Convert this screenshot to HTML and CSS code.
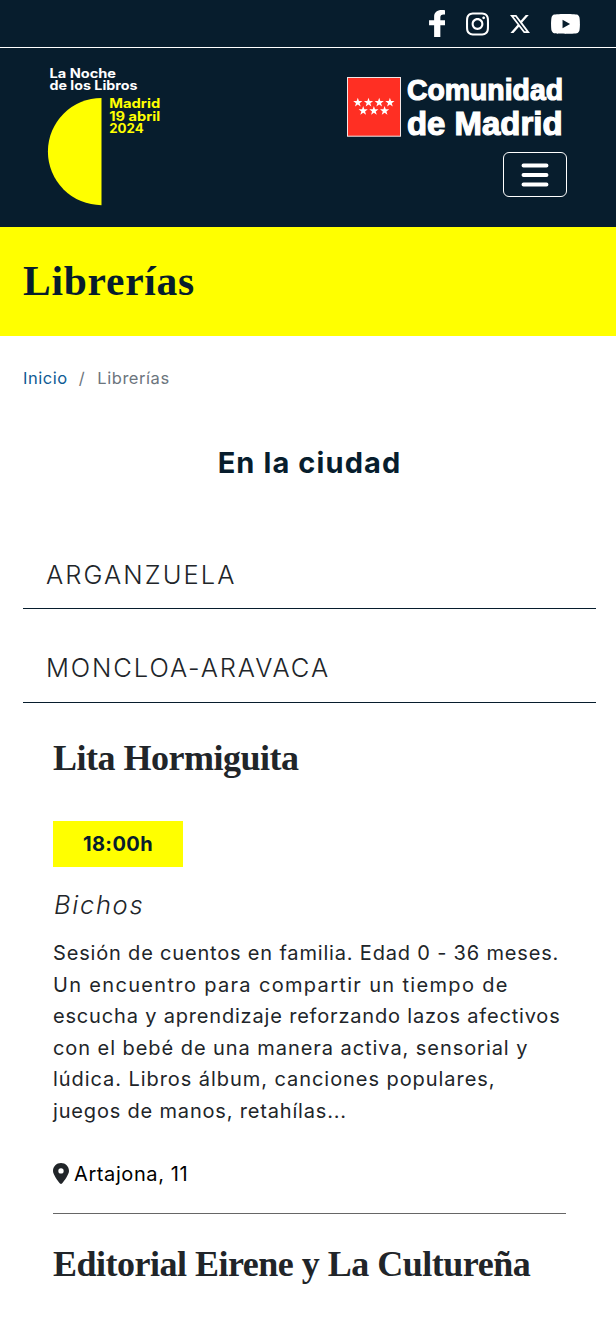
FILE: index.html
```html
<!DOCTYPE html>
<html lang="es">
<head>
<meta charset="utf-8">
<title>Librerías - La Noche de los Libros</title>
<link rel="stylesheet" href="styles.css">
</head>
<body>
<div class="topbar">
  <a class="social"><svg width="16" height="27" viewBox="22 0 257 512" preserveAspectRatio="none"><path d="M279.14 288l14.22-92.66h-88.91v-60.13c0-25.35 12.42-50.06 52.24-50.06h40.42V6.26S260.43 0 225.36 0c-73.22 0-121.08 44.38-121.08 124.72v70.62H22.89V288h81.39v224h100.17V288z"/></svg></a>
  <a class="social"><svg width="23" height="24" viewBox="0 31 448 450"><path d="M224.1 141c-63.6 0-114.9 51.3-114.9 114.9s51.3 114.9 114.9 114.9S339 319.5 339 255.9 287.7 141 224.1 141zm0 189.6c-41.1 0-74.7-33.5-74.7-74.7s33.5-74.7 74.7-74.7 74.7 33.5 74.7 74.7-33.6 74.7-74.7 74.7zm146.4-194.3c0 14.9-12 26.8-26.8 26.8-14.9 0-26.8-12-26.8-26.8s12-26.8 26.8-26.8 26.8 12 26.8 26.8zm76.1 27.2c-1.7-35.9-9.9-67.7-36.2-93.9-26.2-26.2-58-34.4-93.9-36.2-37-2.1-147.9-2.1-184.9 0-35.8 1.7-67.6 9.9-93.9 36.1s-34.4 58-36.2 93.9c-2.1 37-2.1 147.9 0 184.9 1.7 35.9 9.9 67.7 36.2 93.9s58 34.4 93.9 36.2c37 2.1 147.9 2.1 184.9 0 35.9-1.7 67.7-9.9 93.9-36.2 26.2-26.2 34.4-58 36.2-93.9 2.1-37 2.1-147.8 0-184.8zM398.8 388c-7.8 19.6-22.9 34.7-42.6 42.6-29.5 11.7-99.5 9-132.1 9s-102.7 2.6-132.1-9c-19.6-7.8-34.7-22.9-42.6-42.6-11.7-29.5-9-99.5-9-132.1s-2.6-102.7 9-132.1c7.8-19.6 22.9-34.7 42.6-42.6 29.5-11.7 99.5-9 132.1-9s102.7-2.6 132.1 9c19.6 7.8 34.7 22.9 42.6 42.6 11.7 29.5 9 99.5 9 132.1s2.7 102.7-9 132.1z"/></svg></a>
  <a class="social"><svg width="20" height="18" viewBox="1.25 2.25 21.6 19.5" preserveAspectRatio="none"><path d="M18.244 2.25h3.308l-7.227 8.26 8.502 11.24H16.17l-5.214-6.817L4.99 21.75H1.68l7.73-8.835L1.254 2.25H8.08l4.713 6.231zm-1.161 17.52h1.833L7.084 4.126H5.117z"/></svg></a>
  <a class="social"><svg width="29" height="20" viewBox="14 64 548 385" preserveAspectRatio="none"><path d="M549.655 124.083c-6.281-23.65-24.787-42.276-48.284-48.597C458.781 64 288 64 288 64S117.22 64 74.629 75.486c-23.497 6.322-42.003 24.947-48.284 48.597-11.412 42.867-11.412 132.305-11.412 132.305s0 89.438 11.412 132.305c6.281 23.65 24.787 41.5 48.284 47.821C117.22 448 288 448 288 448s170.78 0 213.371-11.486c23.497-6.321 42.003-24.171 48.284-47.821 11.412-42.867 11.412-132.305 11.412-132.305s0-89.438-11.412-132.305zm-317.51 213.508V175.185l142.739 81.205-142.739 81.201z"/></svg></a>
</div>
<header class="header">
  <svg class="event-logo" width="116" height="142" viewBox="46 65 116 142">
    <path class="yellow" d="M101.5 98A53.6 53.6 0 0 0 101.5 205.2Z"/>
    <g class="event-text">
      <text x="49.5" y="77.5" textLength="66.5" lengthAdjust="spacingAndGlyphs">La Noche</text>
      <text x="49.5" y="90.2" textLength="88" lengthAdjust="spacingAndGlyphs">de los Libros</text>
      <g class="yellow">
        <text x="109.2" y="108.2" textLength="51" lengthAdjust="spacingAndGlyphs">Madrid</text>
        <text x="109.2" y="120.6" textLength="51" lengthAdjust="spacingAndGlyphs">19 abril</text>
        <text x="109.2" y="133.2" textLength="34.5" lengthAdjust="spacingAndGlyphs">2024</text>
      </g>
    </g>
  </svg>
  <div class="header-side">
    <svg width="220" height="76" viewBox="347 68 220 76">
      <defs><path id="star" d="M0-4.8 1.15-1.5 4.6-1.5 1.85.6 2.85 3.9 0 1.9-2.85 3.9-1.85.6-4.6-1.5-1.15-1.5Z"/></defs>
      <rect class="flag" x="347.5" y="77.5" width="53" height="58.7"/>
      <g class="white">
        <use href="#star" x="357.8" y="102.6"/><use href="#star" x="368.5" y="102.6"/><use href="#star" x="379.2" y="102.6"/><use href="#star" x="389.9" y="102.6"/>
        <use href="#star" x="363.2" y="110.8"/><use href="#star" x="373.9" y="110.8"/><use href="#star" x="384.6" y="110.8"/>
      </g>
      <g class="region-text">
        <text class="region-top" x="407" y="99.8" textLength="156" lengthAdjust="spacingAndGlyphs">Comunidad</text>
        <text class="region-bottom" x="407" y="134.6" textLength="155.5" lengthAdjust="spacingAndGlyphs">de Madrid</text>
      </g>
    </svg>
    <button class="toggle" aria-label="Menú">
      <svg width="28" height="24" viewBox="0 0 28 24"><path class="bars" d="M2.5 2.5H25.5M2.5 12H25.5M2.5 21.5H25.5"/></svg>
    </button>
  </div>
</header>
<div class="title-band"><h1 class="title">Librerías</h1></div>
<nav class="breadcrumb"><a class="crumb-home">Inicio</a><span class="crumb-slash">/</span><span class="crumb-current">Librerías</span></nav>
<main class="content">
  <h2 class="area">En la ciudad</h2>
  <h3 class="district"><span class="arganzuela">ARGANZUELA</span></h3>
  <h3 class="district second"><span class="moncloa">MONCLOA-ARAVACA</span></h3>
  <article class="shop">
    <h4 class="shop-name">Lita Hormiguita</h4>
    <div class="time">18:00h</div>
    <p class="event-name">Bichos</p>
    <p class="description"><span class="l1">Sesión de cuentos en familia. Edad 0 - 36 meses.</span><br><span class="l2">Un encuentro para compartir un tiempo de</span><br><span class="l3">escucha y aprendizaje reforzando lazos afectivos</span><br><span class="l4">con el bebé de una manera activa, sensorial y</span><br><span class="l5">lúdica. Libros álbum, canciones populares,</span><br><span class="l6">juegos de manos, retahílas...</span></p>
    <p class="address"><svg width="16" height="21" viewBox="0 0 384 512" preserveAspectRatio="none"><path d="M215.7 499.2C267 435 384 279.4 384 192C384 86 298 0 192 0S0 86 0 192c0 87.400 117 243 168.300 307.200c12.300 15.300 35.100 15.300 47.400 0zM192 128a64 64 0 1 1 0 128 64 64 0 1 1 0-128z"/></svg><span class="street">Artajona, 11</span></p>
  </article>
  <article class="shop next-shop">
    <h4 class="shop-name">Editorial Eirene y La Cultureña</h4>
  </article>
</main>
</body>
</html>
```
FILE: styles.css
```css
* { box-sizing: border-box; }
body { margin: 0; height: 1326px; overflow: hidden; background: #fff; color: #212529; font-family: Inter, "Liberation Sans", sans-serif; font-size: 20px; white-space: nowrap; }
h1, h2, h3, h4, p { margin: 0; }
svg { display: block; flex: none; }

.topbar { display: flex; justify-content: flex-end; align-items: center; gap: 21px; height: 48px; padding-right: 36px; background: #071d2d; border-bottom: 1px solid #fff; }
.social { fill: #fff; }
.header { display: flex; justify-content: space-between; height: 179px; padding: 17px 49px 0 46px; background: #071d2d; }
.header-side { display: flex; flex-direction: column; align-items: flex-end; gap: 8px; padding-top: 3px; }
.event-text { fill: #fff; font-family: Inter, sans-serif; font-size: 12.7px; font-weight: 700; }
.yellow { fill: #ff0; }
.white { fill: #fff; }
.flag { fill: #ff2f23; stroke: #f3e6e5; stroke-width: 1; }
.region-text { fill: #fff; stroke: #fff; stroke-width: 1.2; font-family: "Liberation Sans", sans-serif; font-weight: bold; }
.region-top { font-size: 29px; }
.region-bottom { font-size: 32.5px; }
.toggle { display: flex; align-items: center; justify-content: center; width: 64px; height: 45px; padding: 0; background: transparent; border: 1px solid #fff; border-radius: 6px; }
.bars { fill: none; stroke: #fff; stroke-width: 3.9; stroke-linecap: round; }

.title-band { height: 109px; padding: 28px 23px 0; background: #ff0; }
.title { font: bold 41.5px/52px "Liberation Serif", serif; color: #071d2d; letter-spacing: .75px; }
.breadcrumb { display: flex; padding: 30px 23px 0; font-size: 16.5px; line-height: 24px; color: #6c757d; letter-spacing: .55px; }
.crumb-home { color: #0f5b94; }
.crumb-slash { padding: 0 12px 0 11px; }

.content { padding: 0 20px 0 23px; }
.area { margin-top: 55px; text-align: center; font-size: 29px; line-height: 36px; font-weight: 700; letter-spacing: 1.1px; color: #071d2d; }
.district { height: 94px; margin-top: 34px; padding: 41px 23px 0; border-bottom: 1px solid #071d2d; font-size: 25.5px; line-height: 38px; font-weight: 300; }
.arganzuela { letter-spacing: 2.1px; }
.moncloa { letter-spacing: 1.9px; }
.second { margin-top: 0; padding-top: 40px; }
.shop { margin: 0 30px; padding-top: 32px; }
.shop-name { font: bold 36px/46px "Liberation Serif", serif; letter-spacing: -.5px; }
.time { display: flex; align-items: center; justify-content: center; width: 130px; height: 46px; margin-top: 40px; background: #ff0; color: #071d2d; font-weight: 700; letter-spacing: .4px; }
.event-name { margin-top: 19px; padding-left: 1px; font-size: 25.5px; line-height: 38px; font-style: italic; font-weight: 300; letter-spacing: 1.7px; }
.description { margin-top: 14px; line-height: 31.5px; }
.l1, .l3 { letter-spacing: .82px; }
.l2 { letter-spacing: 1.33px; }
.l4, .l5 { letter-spacing: .94px; }
.l6 { letter-spacing: .82px; }
.address { display: flex; align-items: center; gap: 5px; height: 32px; margin-top: 31px; color: #000; }
.address svg { fill: #212529; margin-top: -1px; }
.street { letter-spacing: .6px; }
.next-shop { margin-top: 23px; padding-top: 27px; border-top: 1px solid #666; }
```
